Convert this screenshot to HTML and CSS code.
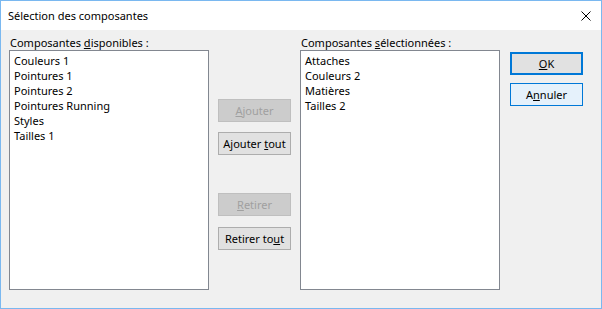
FILE: index.html
```html
<!DOCTYPE html>
<html lang="fr">
<head>
  <meta charset="UTF-8" />
  <title>Sélection des composantes</title>
  <link rel="stylesheet" href="styles.css">
</head>
<body>
  <div class="dialog">
    <div class="titlebar">
      <span class="title">Sélection des composantes</span>
      <svg class="close" width="10" height="10" viewBox="0 0 10 10">
        <path d="M0.5 0.5 L9.5 9.5 M9.5 0.5 L0.5 9.5" stroke="#000" stroke-width="1" fill="none"/>
      </svg>
    </div>

    <div class="client">
      <div class="column">
        <div class="label">Composantes <u>d</u>isponibles :</div>
        <div class="listbox">
          <div class="item">Couleurs 1</div>
          <div class="item">Pointures 1</div>
          <div class="item">Pointures 2</div>
          <div class="item">Pointures Running</div>
          <div class="item">Styles</div>
          <div class="item">Tailles 1</div>
        </div>
      </div>

      <div class="middle">
        <button class="btn disabled"><u>A</u>jouter</button>
        <button class="btn">Ajouter <u>t</u>out</button>
        <button class="btn disabled spaced"><u>R</u>etirer</button>
        <button class="btn">Retirer to<u>u</u>t</button>
      </div>

      <div class="column">
        <div class="label">Composantes <u>s</u>électionnées :</div>
        <div class="listbox">
          <div class="item">Attaches</div>
          <div class="item">Couleurs 2</div>
          <div class="item">Matières</div>
          <div class="item">Tailles 2</div>
        </div>
      </div>

      <div class="actions">
        <button class="btn default"><u>O</u>K</button>
        <button class="btn focus">A<u>n</u>nuler</button>
      </div>
    </div>
  </div>
</body>
</html>
```

FILE: styles.css
```css
body {
  margin: 0;
  font-family: "Noto Sans", "Open Sans", sans-serif;
  font-size: 11px;
  color: #000;
}
.dialog {
  width: 602px;
  height: 309px;
  box-sizing: border-box;
  border: 1px solid #7ab8f0;
  background: #f0f0f0;
  display: flex;
  flex-direction: column;
}
.titlebar {
  height: 29px;
  background: #fff;
  display: flex;
  align-items: center;
  justify-content: space-between;
  padding: 0 10px 0 7px;
}
.title {
  font-size: 11px;
}
.close {
  display: block;
}
.client {
  display: flex;
  align-items: flex-start;
  padding: 5px 0 0 8px;
}
.column {
  display: flex;
  flex-direction: column;
  width: 200px;
}
.label {
  height: 15px;
  line-height: 15px;
  padding-left: 1px;
}
.listbox {
  height: 240px;
  box-sizing: border-box;
  border: 1px solid #828790;
  background: #fff;
  padding: 2px 4px;
}
.item {
  height: 15px;
  line-height: 15px;
}
.middle {
  display: flex;
  flex-direction: column;
  margin: 64px 9px 0 9px;
}
.actions {
  display: flex;
  flex-direction: column;
  gap: 8px;
  margin: 17px 0 0 10px;
}
.btn {
  width: 73px;
  height: 23px;
  box-sizing: border-box;
  border: 1px solid #adadad;
  background: #e1e1e1;
  font-family: inherit;
  font-size: 11px;
  color: #000;
  padding: 0;
  margin-bottom: 10px;
}
.actions .btn {
  margin-bottom: 0;
}
.btn.spaced {
  margin-top: 28px;
  margin-bottom: 11px;
}
.btn.disabled {
  background: #cccccc;
  border-color: #bfbfbf;
  color: #a0a0a0;
}
.btn.default {
  border: 2px solid #0078d7;
}
.btn.focus {
  border-color: #0078d7;
  background: #e5f1fb;
}
```
